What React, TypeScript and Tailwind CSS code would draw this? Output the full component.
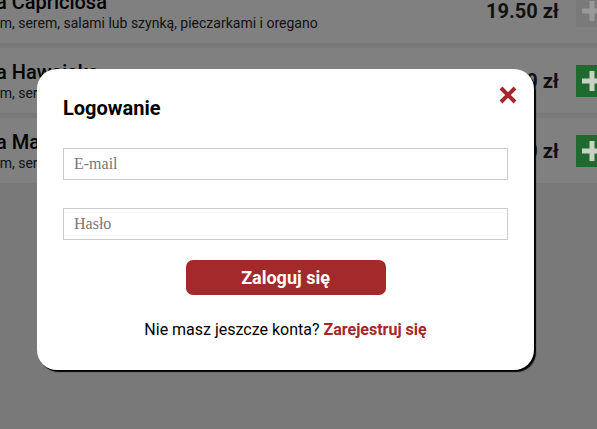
import React from "react";

const items = [
  { name: "Pizza Capriciosa", desc: "Z sosem, serem, salami lub szynką, pieczarkami i oregano", price: "19.50 zł", active: false },
  { name: "Pizza Hawajska", desc: "Z sosem, serem, szynką i ananasem", price: "21.00 zł", active: true },
  { name: "Pizza Margherita", desc: "Z sosem, serem i oregano", price: "17.00 zł", active: true },
];

function Plus({ active }: { active: boolean }) {
  return (
    <div
      className={`w-[32px] h-[32px] shrink-0 flex items-center justify-center ${active ? "bg-[#1e6a2f]" : "bg-[#7a7a7a]"}`}
    >
      <svg width="22" height="22" viewBox="0 0 22 22">
        <rect x="8.5" y="1" width="5" height="20" fill={active ? "#c9d2c4" : "#999999"} />
        <rect x="1" y="8.5" width="20" height="5" fill={active ? "#c9d2c4" : "#999999"} />
      </svg>
    </div>
  );
}

export default function App() {
  return (
    <div
      className="relative w-[597px] h-[429px] overflow-hidden bg-[#797979]"
      style={{ fontFamily: "Roboto, 'Liberation Sans', sans-serif" }}
    >
      <div className="flex flex-col gap-[5px] mt-[-22px] ml-[-42px] w-[650px]">
        {items.map((it) => (
          <div key={it.name} className="h-[65px] bg-[#808080] flex items-start">
            <div className="flex-1 pt-[12px] text-black">
              <div className="text-[20px] leading-[24px] font-medium whitespace-nowrap">{it.name}</div>
              <div className="text-[14px] leading-[18px] text-[#111] whitespace-nowrap">{it.desc}</div>
            </div>
            <div className="self-center flex items-center gap-[17px]">
              <div className="text-[20px] font-bold text-[#111]">{it.price}</div>
              <Plus active={it.active} />
            </div>
          </div>
        ))}
      </div>

      <div className="absolute left-[37px] top-[69px] w-[497px] bg-white rounded-[20px] shadow-[2px_2px_1px_#000] px-[26px] pt-[28px] pb-[31px]">
        <div className="absolute right-[17px] top-[17px] w-[18px] h-[18px]">
          <svg width="18" height="18" viewBox="0 0 18 18">
            <path d="M2 2 L16 16 M16 2 L2 16" stroke="#a3282b" strokeWidth="4" strokeLinecap="butt" />
          </svg>
        </div>
        <h2 className="text-[20px] leading-[23px] font-bold text-black">Logowanie</h2>
        <input
          placeholder="E-mail"
          className="block w-full h-[32px] mt-[28px] border border-[#cccccc] px-[10px] text-[16px] placeholder:text-[#777777] outline-none"
          style={{ fontFamily: "'Liberation Serif', serif" }}
        />
        <input
          placeholder="Hasło"
          type="password"
          className="block w-full h-[32px] mt-[28px] border border-[#cccccc] px-[10px] text-[16px] placeholder:text-[#777777] outline-none"
          style={{ fontFamily: "'Liberation Serif', serif" }}
        />
        <div className="flex justify-center mt-[20px]">
          <button className="w-[200px] h-[35px] rounded-[7px] bg-[#a4292b] text-white text-[18px] font-bold">
            Zaloguj się
          </button>
        </div>
        <p className="mt-[25px] text-center text-[16px] leading-[19px] text-black">
          Nie masz jeszcze konta? <a className="font-bold text-[#a3282b]">Zarejestruj się</a>
        </p>
      </div>
    </div>
  );
}
